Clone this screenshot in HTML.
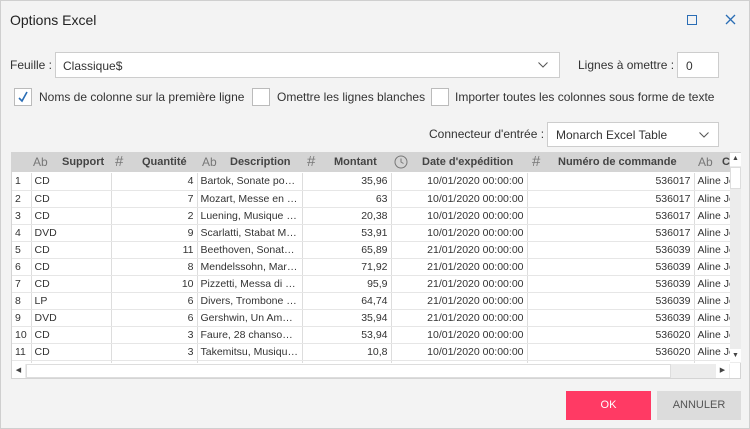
<!DOCTYPE html>
<html><head><meta charset="utf-8"><style>
*{box-sizing:border-box;margin:0;padding:0}
body{width:750px;height:429px;background:#f3f3f3;font-family:"Liberation Sans",sans-serif;font-size:12px;color:#333;position:relative;overflow:hidden;border:1px solid #cfcfcf}
.a{position:absolute}
.box{position:absolute;background:#fff;border:1px solid #cdcdcd}
.cb{position:absolute;width:18px;height:18px;background:#fff;border:1px solid #bbb}
table{border-collapse:collapse;table-layout:fixed;font-size:10.5px}
td{height:17px;border-right:1px solid #ddd;border-bottom:1px solid #e6e6e6;padding:0 3px;white-space:nowrap;overflow:hidden;text-overflow:ellipsis;background:#fff}
td:last-child{text-overflow:clip}
td.r{text-align:right}
.hd{position:absolute;top:151px;height:20px;background:#d4d4d4;font-size:11px;font-weight:bold;color:#444;line-height:20px}
.ic{color:#777;font-weight:normal;font-size:12px}
</style></head><body>
<div class="a" style="left:9px;top:11px;font-size:14px;color:#222">Options Excel</div>
<div class="a" style="left:686px;top:14px;width:10px;height:10px;border:1.5px solid #2a6db5"></div>
<svg class="a" style="left:724px;top:13px" width="11" height="11"><path d="M1 1L10 10M10 1L1 10" stroke="#2a6db5" stroke-width="1.3"/></svg>

<div class="a" style="left:9px;top:57px">Feuille :</div>
<div class="box" style="left:54px;top:51px;width:505px;height:26px"><span class="a" style="left:7px;top:6px">Classique$</span>
<svg class="a" style="left:482px;top:9px" width="10" height="6"><path d="M0.5 0.5L5 5L9.5 0.5" stroke="#555" fill="none"/></svg></div>
<div class="a" style="left:577px;top:57px">Lignes à omettre :</div>
<div class="box" style="left:676px;top:51px;width:42px;height:26px"><span class="a" style="left:8px;top:6px">0</span></div>

<div class="cb" style="left:13px;top:87px"><svg class="a" style="left:2px;top:2px" width="12" height="12"><path d="M2 7L5 10L10 1" stroke="#2a6db5" stroke-width="1.6" fill="none"/></svg></div>
<div class="a" style="left:38px;top:89px">Noms de colonne sur la première ligne</div>
<div class="cb" style="left:251px;top:87px"></div>
<div class="a" style="left:276px;top:89px">Omettre les lignes blanches</div>
<div class="cb" style="left:430px;top:87px"></div>
<div class="a" style="left:454px;top:89px">Importer toutes les colonnes sous forme de texte</div>

<div class="a" style="left:428px;top:126px">Connecteur d'entrée :</div>
<div class="box" style="left:546px;top:121px;width:172px;height:25px"><span class="a" style="left:8px;top:5px">Monarch Excel Table</span>
<svg class="a" style="left:151px;top:9px" width="10" height="6"><path d="M0.5 0.5L5 5L9.5 0.5" stroke="#555" fill="none"/></svg></div>

<div class="a" style="left:10px;top:151px;width:730px;height:227px;background:#fff;border:1px solid #d4d4d4"></div>
<div class="hd" style="left:10px;width:719px"></div>
<div class="hd" style="left:32px"><span class="ic">Ab</span></div>
<div class="hd" style="left:61px">Support</div>
<div class="hd" style="left:114px"><span class="ic" style="font-size:15px">#</span></div>
<div class="hd" style="left:141px">Quantité</div>
<div class="hd" style="left:201px"><span class="ic">Ab</span></div>
<div class="hd" style="left:229px">Description</div>
<div class="hd" style="left:306px"><span class="ic" style="font-size:15px">#</span></div>
<div class="hd" style="left:333px">Montant</div>
<svg class="a" style="left:393px;top:154px" width="14" height="14"><circle cx="7" cy="7" r="6" fill="none" stroke="#777"/><path d="M7 3.5V7L9.5 8.5" stroke="#777" fill="none"/></svg>
<div class="hd" style="left:421px">Date d'expédition</div>
<div class="hd" style="left:531px"><span class="ic" style="font-size:15px">#</span></div>
<div class="hd" style="left:557px">Numéro de commande</div>
<div class="hd" style="left:697px"><span class="ic">Ab</span></div>
<div class="hd" style="left:721px;width:8px;overflow:hidden">C</div>

<div class="a" style="left:11px;top:172px;width:718px;height:190px;overflow:hidden">
<table style="width:720px">
<colgroup><col style="width:19px"><col style="width:80px"><col style="width:86px"><col style="width:105px"><col style="width:89px"><col style="width:136px"><col style="width:167px"><col style="width:38px"></colgroup>
<tbody>
<tr><td>1</td><td>CD</td><td class="r">4</td><td>Bartok, Sonate pour...</td><td class="r">35,96</td><td class="r">10/01/2020 00:00:00</td><td class="r">536017</td><td>Aline Je</td></tr>
<tr><td>2</td><td>CD</td><td class="r">7</td><td>Mozart, Messe en do...</td><td class="r">63</td><td class="r">10/01/2020 00:00:00</td><td class="r">536017</td><td>Aline Je</td></tr>
<tr><td>3</td><td>CD</td><td class="r">2</td><td>Luening, Musique éle...</td><td class="r">20,38</td><td class="r">10/01/2020 00:00:00</td><td class="r">536017</td><td>Aline Je</td></tr>
<tr><td>4</td><td>DVD</td><td class="r">9</td><td>Scarlatti, Stabat Mater</td><td class="r">53,91</td><td class="r">10/01/2020 00:00:00</td><td class="r">536017</td><td>Aline Je</td></tr>
<tr><td>5</td><td>CD</td><td class="r">11</td><td>Beethoven, Sonate P...</td><td class="r">65,89</td><td class="r">21/01/2020 00:00:00</td><td class="r">536039</td><td>Aline Je</td></tr>
<tr><td>6</td><td>CD</td><td class="r">8</td><td>Mendelssohn, March...</td><td class="r">71,92</td><td class="r">21/01/2020 00:00:00</td><td class="r">536039</td><td>Aline Je</td></tr>
<tr><td>7</td><td>CD</td><td class="r">10</td><td>Pizzetti, Messa di Re...</td><td class="r">95,9</td><td class="r">21/01/2020 00:00:00</td><td class="r">536039</td><td>Aline Je</td></tr>
<tr><td>8</td><td>LP</td><td class="r">6</td><td>Divers, Trombone mo...</td><td class="r">64,74</td><td class="r">21/01/2020 00:00:00</td><td class="r">536039</td><td>Aline Je</td></tr>
<tr><td>9</td><td>DVD</td><td class="r">6</td><td>Gershwin, Un Améric...</td><td class="r">35,94</td><td class="r">21/01/2020 00:00:00</td><td class="r">536039</td><td>Aline Je</td></tr>
<tr><td>10</td><td>CD</td><td class="r">3</td><td>Faure, 28 chansons, S...</td><td class="r">53,94</td><td class="r">10/01/2020 00:00:00</td><td class="r">536020</td><td>Aline Je</td></tr>
<tr><td>11</td><td>CD</td><td class="r">3</td><td>Takemitsu, Musique...</td><td class="r">10,8</td><td class="r">10/01/2020 00:00:00</td><td class="r">536020</td><td>Aline Je</td></tr>
<tr><td></td><td></td><td></td><td></td><td></td><td></td><td></td><td></td></tr>
</tbody></table></div>

<div class="a" style="left:729px;top:152px;width:11px;height:210px;background:#ececec"></div>
<div class="a" style="left:729px;top:152px;width:11px;height:13px;background:#fff;font-size:7px;text-align:center;line-height:12px;color:#444">▲</div>
<div class="a" style="left:729px;top:166px;width:11px;height:22px;background:#fff;border:1px solid #ddd"></div>
<div class="a" style="left:729px;top:348px;width:11px;height:13px;background:#fff;font-size:7px;text-align:center;line-height:13px;color:#444">▼</div>
<div class="a" style="left:11px;top:363px;width:718px;height:14px;background:#ececec"></div>
<div class="a" style="left:11px;top:363px;width:13px;height:14px;background:#fff;font-size:7px;line-height:14px;text-align:center;color:#444">◀</div>
<div class="a" style="left:25px;top:363px;width:645px;height:14px;background:#fff;border:1px solid #ddd"></div>
<div class="a" style="left:715px;top:363px;width:13px;height:14px;background:#fff;font-size:7px;line-height:14px;text-align:center;color:#444">▶</div>

<div class="a" style="left:565px;top:390px;width:85px;height:29px;background:#ff3a64;color:#fff;text-align:center;line-height:29px;font-size:11px">OK</div>
<div class="a" style="left:656px;top:390px;width:84px;height:29px;background:#dcdcdc;color:#555;text-align:center;line-height:29px;font-size:11px">ANNULER</div>
</body></html>
